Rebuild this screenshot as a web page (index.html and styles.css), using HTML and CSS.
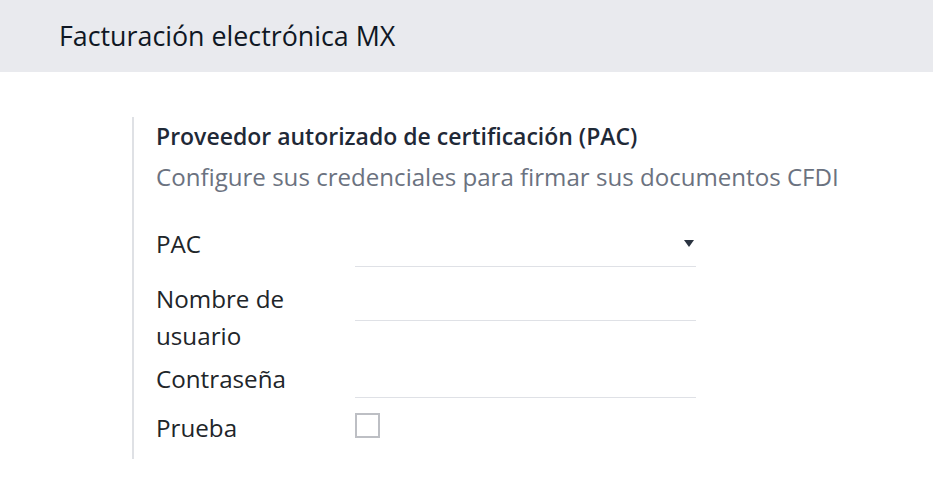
FILE: index.html
```html
<!DOCTYPE html>
<html lang="es">
<head>
<meta charset="utf-8">
<title>Facturación electrónica MX</title>
<link rel="stylesheet" href="styles.css">
</head>
<body>
<div class="app-header">
  <h2 class="app-title">Facturación electrónica MX</h2>
</div>
<div class="settings">
  <div class="setting-box">
    <div class="setting-title">Proveedor autorizado de certificación (PAC)</div>
    <div class="setting-help">Configure sus credenciales para firmar sus documentos CFDI</div>
    <div class="form">
      <div class="row row-pac">
        <label class="lbl">PAC</label>
        <div class="field field-select">
          <span class="caret"></span>
        </div>
      </div>
      <div class="row row-user">
        <label class="lbl">Nombre de usuario</label>
        <div class="field field-user"></div>
      </div>
      <div class="row row-pass">
        <label class="lbl">Contraseña</label>
        <div class="field field-pass"></div>
      </div>
      <div class="row row-test">
        <label class="lbl">Prueba</label>
        <div class="check-wrap"><span class="checkbox"></span></div>
      </div>
    </div>
  </div>
</div>
</body>
</html>
```
FILE: styles.css
```css
html, body {
  margin: 0;
  padding: 0;
  background: #ffffff;
}
body {
  font-family: "Open Sans", "Noto Sans", sans-serif;
  color: #212529;
}
.app-header {
  height: 72px;
  background: #e9eaee;
  display: flex;
  align-items: center;
  padding-left: 59px;
}
.app-title {
  margin: 0;
  font-size: 26.8px;
  font-weight: 400;
  color: #0f1724;
  line-height: 1;
}
.settings {
  padding-top: 45px;
  padding-left: 132px;
}
.setting-box {
  border-left: 2px solid #dfe1e5;
  padding-left: 22px;
  padding-top: 2px;
  padding-bottom: 13px;
  width: 740px;
}
.setting-title {
  font-size: 23px;
  font-weight: 600;
  color: #1f2937;
  line-height: 34px;
}
.setting-help {
  margin-top: 5px;
  font-size: 24.1px;
  color: #6b7280;
  line-height: 37px;
}
.form {
  margin-top: 30px;
}
.row {
  display: flex;
  align-items: flex-start;
}
.lbl {
  box-sizing: border-box;
  width: 199px;
  flex: 0 0 199px;
  padding-right: 40px;
  font-size: 24.2px;
  line-height: 37px;
  color: #212529;
}
.field {
  width: 341px;
  box-sizing: border-box;
  border-bottom: 1px solid #dfe1e6;
}
.field-select {
  height: 42px;
  display: flex;
  justify-content: flex-end;
  align-items: flex-start;
  padding-top: 15px;
  padding-right: 2px;
}
.caret {
  width: 0;
  height: 0;
  border-left: 5.5px solid transparent;
  border-right: 5.5px solid transparent;
  border-top: 7px solid #2b3441;
}
.row-user { margin-top: 13px; }
.field-user { height: 41px; }
.row-pass { margin-top: 6px; }
.field-pass { height: 38px; }
.row-test { margin-top: 11px; }
.check-wrap {
  padding-top: 4px;
}
.checkbox {
  display: block;
  width: 25px;
  height: 25px;
  box-sizing: border-box;
  border: 2px solid #bdbfc4;
  background: #fff;
}
```
